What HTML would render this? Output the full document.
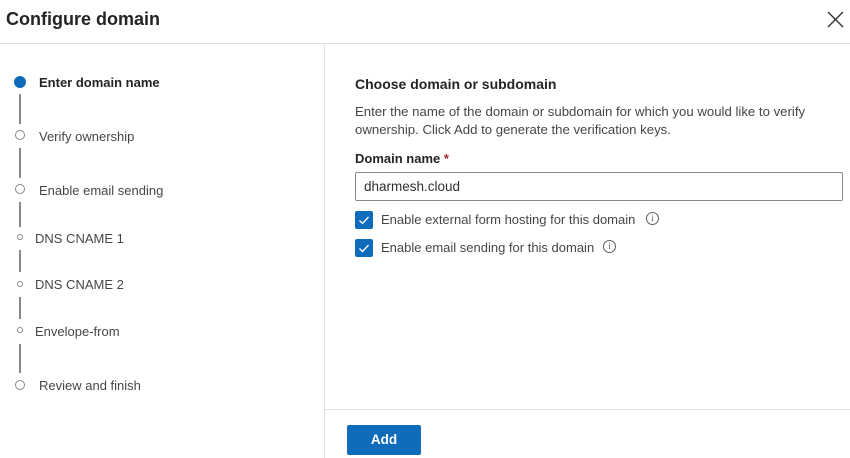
<!DOCTYPE html>
<html><head><style>
*{margin:0;padding:0;box-sizing:border-box}
body{width:850px;height:458px;background:#fff;font-family:"Liberation Sans",sans-serif;color:#323130;position:relative;overflow:hidden}
.a{position:absolute;white-space:nowrap}
.vl{position:absolute;left:19px;width:2px;background:#8a8886}
.dot{position:absolute;border-radius:50%;border:1px solid #8a8886;background:#fff}
.st{position:absolute;font-size:13px;color:#484644}
.cb{position:absolute;left:355px;width:18px;height:18px;background:#0f6cbd;border-radius:2px}
.info{position:absolute;width:13px;height:13px;border:1px solid #605e5c;border-radius:50%;font-size:9px;text-align:center;line-height:11px;color:#605e5c;font-family:"Liberation Serif",serif}
</style></head><body>
<div class="a" style="left:6px;top:9px;font-size:18px;font-weight:bold;color:#252423">Configure domain</div>
<svg class="a" style="left:827px;top:11px" width="17" height="17"><path d="M1 1L16 16M16 1L1 16" stroke="#323130" stroke-width="1.4"/></svg>
<div class="a" style="left:0;top:43px;width:850px;height:1px;background:#e1dfdd"></div>
<div class="a" style="left:324px;top:44px;width:1px;height:414px;background:#e1dfdd"></div>
<div class="a" style="left:325px;top:409px;width:525px;height:1px;background:#e1dfdd"></div>

<div class="a" style="left:14px;top:76px;width:12px;height:12px;border-radius:50%;background:#0f6cbd"></div>
<div class="st" style="left:39px;top:75px;font-weight:bold;color:#252423">Enter domain name</div>
<div class="vl" style="top:94px;height:30px"></div>
<div class="dot" style="left:15px;top:130px;width:10px;height:10px"></div>
<div class="st" style="left:39px;top:129px">Verify ownership</div>
<div class="vl" style="top:148px;height:30px"></div>
<div class="dot" style="left:15px;top:184px;width:10px;height:10px"></div>
<div class="st" style="left:39px;top:183px">Enable email sending</div>
<div class="vl" style="top:202px;height:25px"></div>
<div class="dot" style="left:17px;top:234px;width:6px;height:6px"></div>
<div class="st" style="left:35px;top:231px">DNS CNAME 1</div>
<div class="vl" style="top:250px;height:22px"></div>
<div class="dot" style="left:17px;top:281px;width:6px;height:6px"></div>
<div class="st" style="left:35px;top:277px">DNS CNAME 2</div>
<div class="vl" style="top:297px;height:22px"></div>
<div class="dot" style="left:17px;top:327px;width:6px;height:6px"></div>
<div class="st" style="left:35px;top:324px">Envelope-from</div>
<div class="vl" style="top:344px;height:29px"></div>
<div class="dot" style="left:15px;top:380px;width:10px;height:10px"></div>
<div class="st" style="left:39px;top:378px">Review and finish</div>

<div class="a" style="left:355px;top:76px;font-size:14px;font-weight:bold;color:#252423">Choose domain or subdomain</div>
<div class="a" style="left:355px;top:103px;font-size:13.2px;line-height:18px;color:#484644">Enter the name of the domain or subdomain for which you would like to verify<br>ownership. Click Add to generate the verification keys.</div>
<div class="a" style="left:355px;top:151px;font-size:13px;font-weight:bold;color:#252423">Domain name <span style="color:#a4262c">*</span></div>
<div class="a" style="left:355px;top:172px;width:488px;height:29px;border:1px solid #8a8886;border-radius:2px;font-size:13.5px;padding:6px 0 0 8px;color:#323130">dharmesh.cloud</div>
<div class="cb" style="top:211px"><svg width="18" height="18"><path d="M4.5 9.5L7.5 12.5L13.5 6" stroke="#fff" stroke-width="1.3" fill="none"/></svg></div>
<div class="a" style="left:381px;top:212px;font-size:13px;color:#484644">Enable external form hosting for this domain</div>
<div class="info" style="left:646px;top:212px">i</div>
<div class="cb" style="top:239px"><svg width="18" height="18"><path d="M4.5 9.5L7.5 12.5L13.5 6" stroke="#fff" stroke-width="1.3" fill="none"/></svg></div>
<div class="a" style="left:381px;top:240px;font-size:13px;color:#484644">Enable email sending for this domain</div>
<div class="info" style="left:603px;top:240px">i</div>

<div class="a" style="left:347px;top:425px;width:74px;height:30px;background:#0f6cbd;border-radius:2px;color:#fff;font-size:13.5px;font-weight:bold;text-align:center;line-height:30px">Add</div>
</body></html>
